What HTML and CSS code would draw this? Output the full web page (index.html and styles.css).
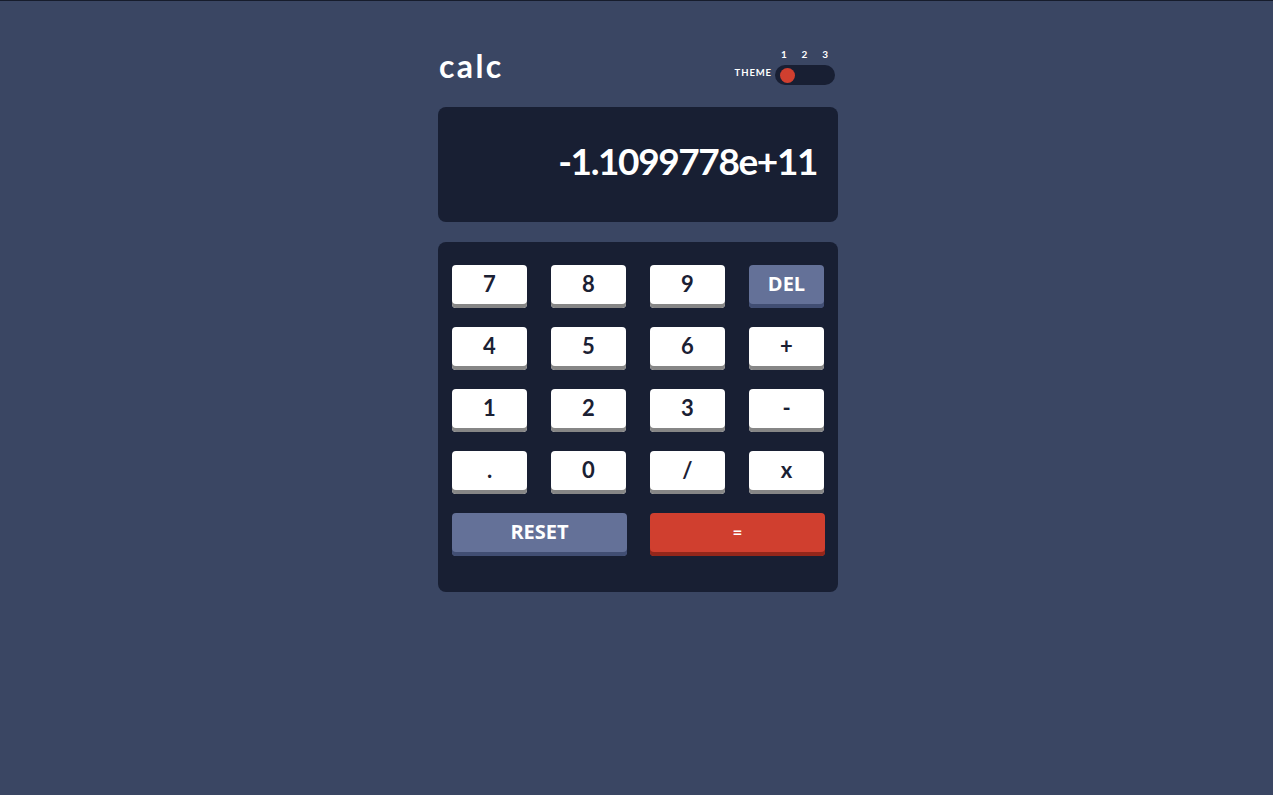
FILE: index.html
```html
<!DOCTYPE html>
<html lang="en">
<head>
<meta charset="utf-8">
<title>calc</title>
<link rel="stylesheet" href="styles.css">
</head>
<body>
<main class="calc">
  <header class="top">
    <h1 class="logo">calc</h1>
    <div class="theme">
      <span class="theme-label">THEME</span>
      <div class="theme-switch">
        <div class="theme-nums"><span>1</span><span>2</span><span>3</span></div>
        <div class="track"><span class="knob"></span></div>
      </div>
    </div>
  </header>
  <section class="screen">-1.1099778e+11</section>
  <section class="keypad">
    <button class="key">7</button>
    <button class="key">8</button>
    <button class="key">9</button>
    <button class="key key-del">DEL</button>
    <button class="key">4</button>
    <button class="key">5</button>
    <button class="key">6</button>
    <button class="key">+</button>
    <button class="key">1</button>
    <button class="key">2</button>
    <button class="key">3</button>
    <button class="key">-</button>
    <button class="key">.</button>
    <button class="key">0</button>
    <button class="key">/</button>
    <button class="key">x</button>
    <button class="key key-reset">RESET</button>
    <button class="key key-eq">=</button>
  </section>
</main>
</body>
</html>
```

FILE: styles.css
```css
* { box-sizing: border-box; }
html, body { height: 100%; }
body {
  margin: 0;
  background: #3a4663;
  border-top: 1px solid #161c2c;
  font-family: "Lato", "Noto Sans", sans-serif;
  color: #fff;
}
.calc {
  width: 400px;
  margin-left: calc(50% - 198.5px);
  padding-top: 46px;
}
.top {
  display: flex;
  justify-content: space-between;
  align-items: flex-end;
  height: 38px;
  margin-bottom: 22px;
}
.logo {
  margin: 0 0 3px 1px;
  font-size: 32px;
  font-weight: 700;
  line-height: 32px;
  letter-spacing: 2.4px;
}
.theme {
  display: flex;
  align-items: flex-end;
  gap: 3px;
  margin-right: 3px;
}
.theme-label {
  font-size: 9.5px;
  font-weight: 700;
  letter-spacing: 0.9px;
  line-height: 10px;
  margin-bottom: 7px;
}
.theme-switch {
  display: flex;
  flex-direction: column;
  gap: 6px;
}
.theme-nums {
  display: flex;
  justify-content: space-between;
  padding: 0 7px 0 6px;
  font-size: 10px;
  font-weight: 700;
  line-height: 10px;
}
.track {
  width: 60px;
  height: 20px;
  border-radius: 10px;
  background: #181f33;
  display: flex;
  align-items: center;
  padding: 0 5px;
}
.knob {
  width: 15px;
  height: 15px;
  border-radius: 50%;
  background: #d03f2f;
}
.screen {
  height: 115px;
  background: #181f33;
  border-radius: 8px;
  display: flex;
  align-items: center;
  justify-content: flex-end;
  padding: 0 21px 8px;
  font-size: 37px;
  font-weight: 700;
  letter-spacing: -1.4px;
}
.keypad {
  margin-top: 20px;
  height: 350px;
  background: #181f33;
  border-radius: 8px;
  padding: 23px 14px;
  display: grid;
  grid-template-columns: repeat(4, 75px);
  grid-auto-rows: 43px;
  column-gap: 24px;
  row-gap: 19px;
}
.key {
  border: none;
  border-radius: 4px;
  background: #fff;
  box-shadow: inset 0 -4px 0 #868686;
  color: #1a2033;
  font-family: inherit;
  font-size: 22px;
  font-weight: 700;
  padding: 0 0 6px;
  line-height: 1;
  cursor: pointer;
}
.key-del, .key-reset {
  background: #647198;
  box-shadow: inset 0 -4px 0 #414e73;
  color: #fff;
  font-family: "Open Sans", "Noto Sans", sans-serif;
  font-size: 20px;
}
.key-reset {
  grid-column: span 2;
  width: 175px;
}
.key-eq {
  grid-column: span 2;
  width: 175px;
  background: #d03f2f;
  box-shadow: inset 0 -4px 0 #93261a;
  color: #fff;
  font-size: 17px;
}
```
